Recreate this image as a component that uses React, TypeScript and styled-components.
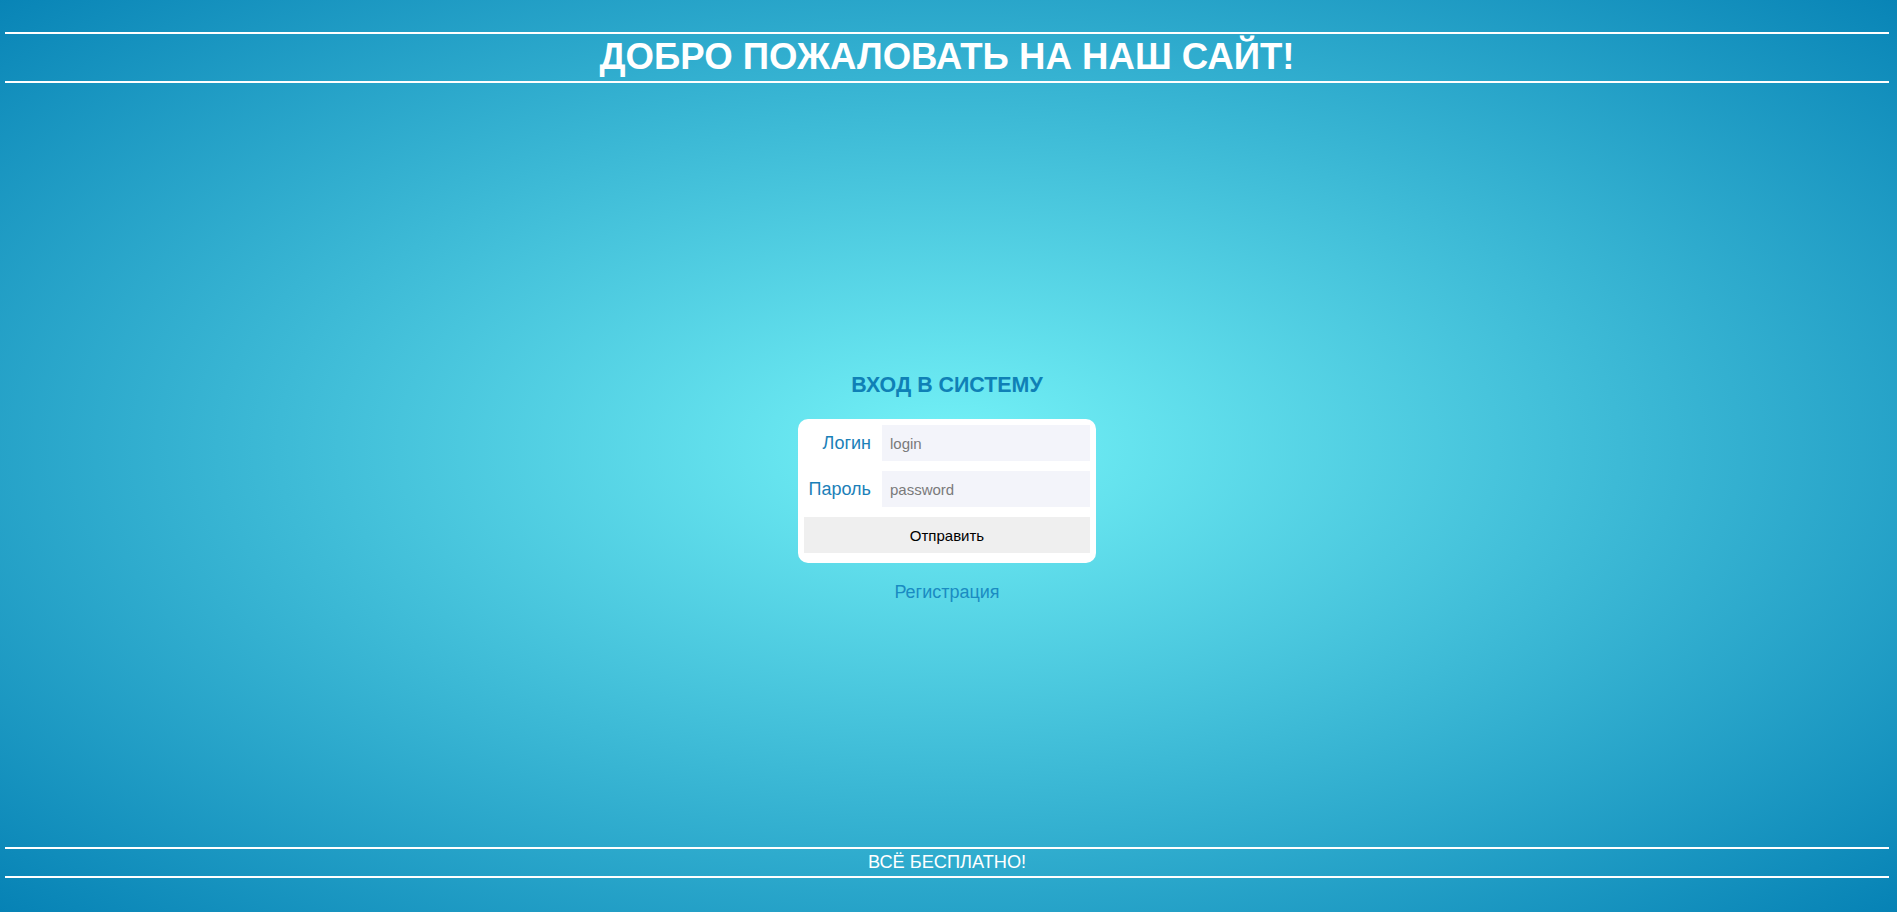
import React from "react";
import styled, { createGlobalStyle } from "styled-components";

const GlobalStyle = createGlobalStyle`
  html, body {
    margin: 0;
    padding: 0;
    height: 100%;
  }
  body {
    font-family: "Liberation Sans", Arial, sans-serif;
    background: radial-gradient(ellipse farthest-corner at 50% 49%, #74f2f7 0%, #0682b5 100%);
    background-attachment: fixed;
  }
`;

const Page = styled.div`
  min-height: 100vh;
  box-sizing: border-box;
  display: flex;
  flex-direction: column;
  padding: 32px 8px 34px 5px;
`;

const Header = styled.h1`
  margin: 0;
  border-top: 2px solid #fff;
  border-bottom: 2px solid #fff;
  padding: 2px 0 4px;
  font-size: 36.6px;
  line-height: 41px;
  font-weight: 700;
  color: #fff;
  text-align: center;
`;

const Main = styled.main`
  flex: 1;
  display: flex;
  flex-direction: column;
  align-items: center;
  justify-content: center;
  padding-top: 46px;
`;

const Title = styled.h2`
  margin: 0 0 22px;
  font-size: 21.4px;
  line-height: 24px;
  font-weight: 700;
  color: #0f80b6;
`;

const Card = styled.form`
  background: #fff;
  border-radius: 10px;
  padding: 6px 6px 10px;
  display: grid;
  grid-template-columns: 67px 208px;
  column-gap: 11px;
  row-gap: 10px;
  align-items: center;
`;

const Label = styled.label`
  justify-self: end;
  font-size: 18px;
  color: #1b80b8;
`;

const Input = styled.input`
  box-sizing: border-box;
  height: 36px;
  width: 208px;
  border: none;
  outline: none;
  background: #f3f4fa;
  padding: 1px 8px 0;
  font-family: "Liberation Sans", Arial, sans-serif;
  font-size: 15px;
  color: #333;
  &::placeholder {
    color: #7a7a7a;
  }
`;

const Submit = styled.button`
  grid-column: 1 / -1;
  height: 36px;
  border: none;
  background: #efefef;
  font-family: "Liberation Sans", Arial, sans-serif;
  font-size: 15px;
  color: #000;
  cursor: pointer;
`;

const RegLink = styled.a`
  margin-top: 19px;
  font-size: 18px;
  line-height: 21px;
  color: #1a8bc2;
  text-decoration: none;
`;

const Footer = styled.footer`
  border-top: 2px solid #fff;
  border-bottom: 2px solid #fff;
  height: 27px;
  line-height: 27px;
  font-size: 18.2px;
  color: #fff;
  text-align: center;
`;

export default function App() {
  return (
    <>
      <GlobalStyle />
      <Page>
        <Header>ДОБРО ПОЖАЛОВАТЬ НА НАШ САЙТ!</Header>
        <Main>
          <Title>ВХОД В СИСТЕМУ</Title>
          <Card onSubmit={(e) => e.preventDefault()}>
            <Label htmlFor="login">Логин</Label>
            <Input id="login" placeholder="login" />
            <Label htmlFor="password">Пароль</Label>
            <Input id="password" type="password" placeholder="password" />
            <Submit type="submit">Отправить</Submit>
          </Card>
          <RegLink href="#">Регистрация</RegLink>
        </Main>
        <Footer>ВСЁ БЕСПЛАТНО!</Footer>
      </Page>
    </>
  );
}
